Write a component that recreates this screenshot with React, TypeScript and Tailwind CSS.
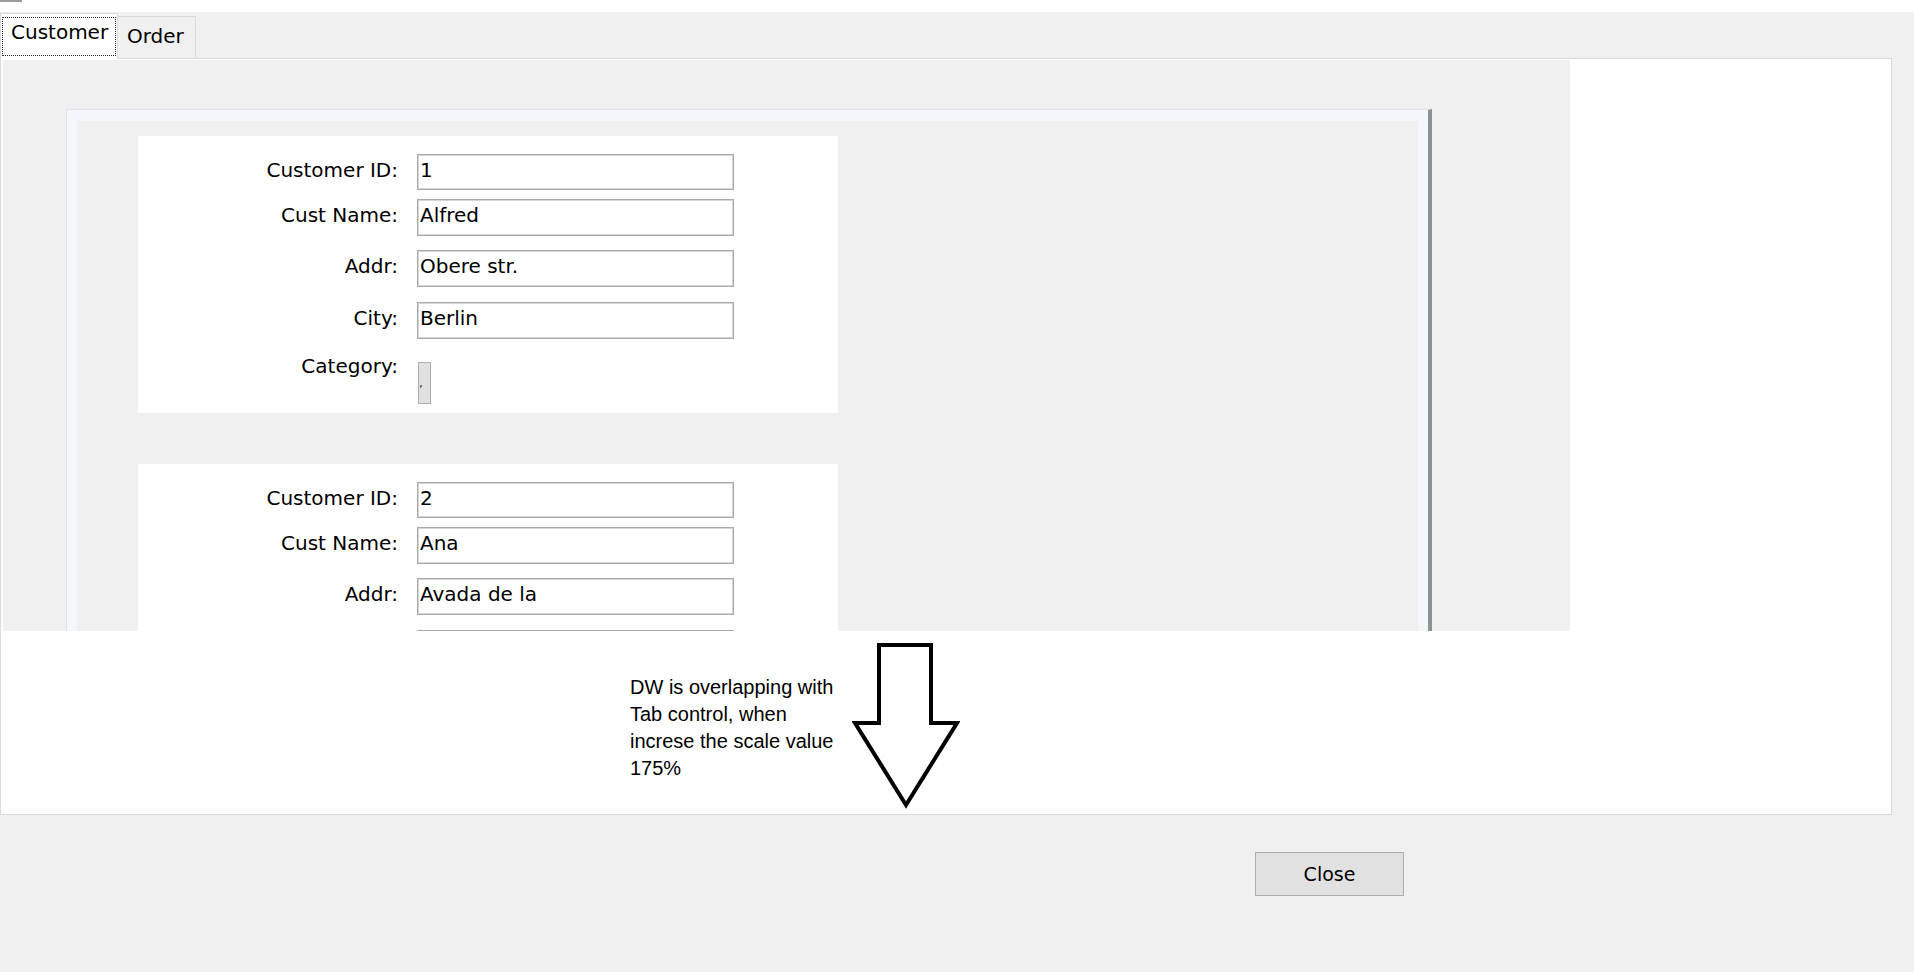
import React from 'react';

type Customer = { id: string; name: string; addr: string; city: string };

const customers: Customer[] = [
  { id: '1', name: 'Alfred', addr: 'Obere str.', city: 'Berlin' },
  { id: '2', name: 'Ana', addr: 'Avada de la', city: '' },
];

function Field({ label, value, className }: { label: string; value: string; className: string }) {
  return (
    <div className={`flex ${className}`}>
      <div className="w-[260px] text-right leading-[32px] whitespace-nowrap">{label}</div>
      <div className="ml-[19px] w-[317px] h-full border border-[#a9a9a9] shadow-[inset_0_0_0_1px_#d6d6d6] bg-white pl-[2px] leading-[31px] whitespace-nowrap overflow-hidden">
        {value}
      </div>
    </div>
  );
}

function CustomerCard({ c }: { c: Customer }) {
  return (
    <div className="w-[700px] h-[277px] shrink-0 bg-white pt-[18px]">
      <Field label="Customer ID:" value={c.id} className="h-[36px]" />
      <Field label="Cust Name:" value={c.name} className="mt-[9px] h-[37px]" />
      <Field label="Addr:" value={c.addr} className="mt-[14px] h-[37px]" />
      <Field label="City:" value={c.city} className="mt-[15px] h-[37px]" />
      {/* Category: tiny dropdown squeezed by the scaling */}
      <div className="mt-[23px] flex items-start">
        <div className="w-[260px] text-right leading-[24px] -mt-[8px]">Category:</div>
        <div className="ml-[20px] w-[13px] h-[42px] bg-[#e1e1e1] border border-[#adadad] flex items-center text-[12px] leading-none text-[#333]">
          ,
        </div>
      </div>
    </div>
  );
}

export default function App() {
  return (
    <div className="w-[1914px] h-[972px] overflow-hidden bg-[#f0f0f0] text-black text-[20px] font-['DejaVu_Sans',sans-serif] flex flex-col">
      {/* top strip */}
      <div className="h-[12px] bg-white shrink-0">
        <div className="w-[22px] h-[2px] bg-[#9c9c9c]" />
      </div>

      {/* Tabs */}
      <div className="h-[47px] shrink-0 flex items-end">
        <div className="relative z-10 w-[118px] h-[46px] bg-white border border-b-0 border-[#d9d9d9] pt-[3px] px-[1px]">
          <div className="h-[39px] border border-dotted border-[#222] px-[8px] leading-[29px] whitespace-nowrap">
            Customer
          </div>
        </div>
        <div className="w-[78px] h-[43px] bg-[#f0f0f0] border border-l-0 border-b-0 border-[#d9d9d9] pl-[9px] pt-[4px] leading-[30px]">
          Order
        </div>
      </div>

      {/* Tab page */}
      <div className="-mt-[1px] w-[1892px] h-[757px] shrink-0 bg-white border border-[#d9d9d9] pl-[2px] pt-[1px]">
        {/* DataWindow control */}
        <div className="w-[1567px] h-[571px] bg-[#f0f0f0] overflow-hidden pl-[63px] pt-[49px]">
          <div className="w-[1366px] h-[620px] border-l border-t border-[#e2e2e2] border-r-[4px] border-r-[#909090] bg-[#f3f6fb] pl-[10px] pt-[11px] pr-[10px]">
            <div className="h-full bg-[#f0f0f0] pl-[61px] pt-[15px] flex flex-col gap-[51px]">
              {customers.map((c) => (
                <CustomerCard key={c.id} c={c} />
              ))}
            </div>
          </div>
        </div>

        {/* annotation */}
        <div className="mt-[12px] ml-[627px] flex items-start">
          <div className="w-[222px] mt-[31px] font-['Liberation_Sans',sans-serif] text-[20px] leading-[27px]">
            <div>DW is overlapping with</div>
            <div>Tab control, when</div>
            <div>increse the scale value</div>
            <div>175%</div>
          </div>
          <svg width="108" height="166" viewBox="0 0 108 166" fill="none">
            <path d="M27 2 L79 2 L79 80 L105 80 L54 162 L3 80 L27 80 Z" fill="white" stroke="black" strokeWidth="4" strokeLinejoin="miter" />
          </svg>
        </div>
      </div>

      {/* bottom bar */}
      <div className="flex-1 pl-[1255px] pt-[37px]">
        <button className="w-[149px] h-[44px] bg-[#e1e1e1] border border-[#adadad] text-[19px] font-['DejaVu_Sans',sans-serif] leading-none text-black">
          Close
        </button>
      </div>
    </div>
  );
}
